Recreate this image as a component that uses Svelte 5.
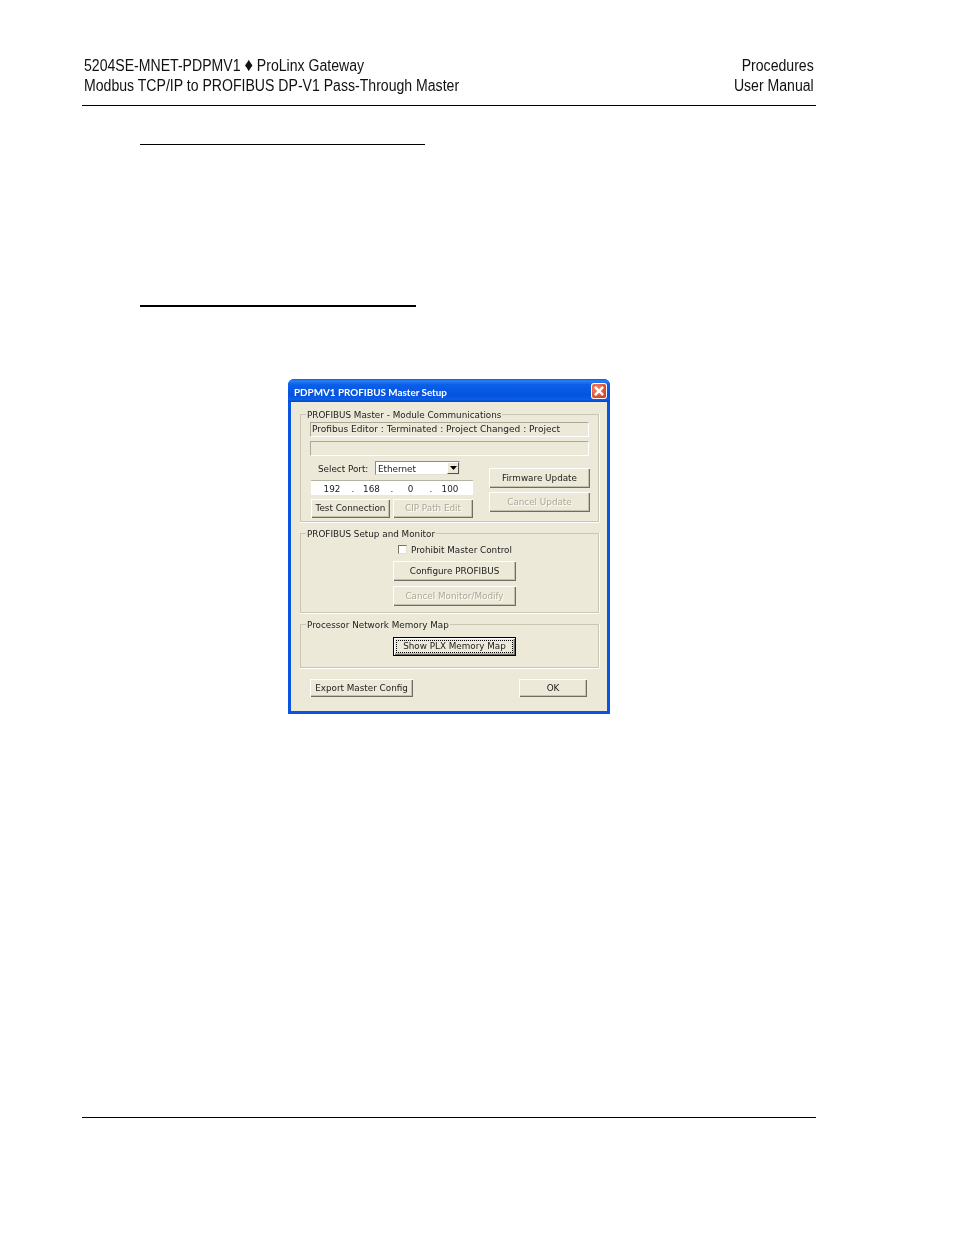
<script>
  const ip = ['192', '168', '0', '100'];
</script>

<div class="page">
  <header class="head">
    <div class="lines">
      <div>5204SE-MNET-PDPMV1 <span class="gem">♦</span> ProLinx Gateway</div>
      <div>Modbus TCP/IP to PROFIBUS DP-V1 Pass-Through Master</div>
    </div>
    <div class="lines right">
      <div>Procedures</div>
      <div>User Manual</div>
    </div>
  </header>

  <main class="main">
    <div class="rule one"></div>
    <div class="rule two"></div>

    <section class="dialog">
      <div class="title">
        <span class="ttext">PDPMV1 PROFIBUS Master Setup</span>
        <div class="close">
          <svg viewBox="0 0 16 16" width="16" height="16">
            <path d="M4.8 4.8l6.4 6.4M11.2 4.8l-6.4 6.4" stroke="#fff" stroke-width="2.4" stroke-linecap="square" fill="none" />
          </svg>
        </div>
      </div>
      <div class="client">
        <fieldset class="g1">
          <legend>PROFIBUS Master - Module Communications</legend>
          <div class="status">Profibus Editor : Terminated : Project Changed : Project</div>
          <div class="status s2"></div>
          <div class="cols">
            <div class="left">
              <div class="port">
                <span class="plabel">Select Port:</span>
                <div class="select">
                  <span>Ethernet</span>
                  <div class="arrow"><svg viewBox="0 0 7 4" width="7" height="4"><path d="M0 0h7L3.5 4z" fill="#000" /></svg></div>
                </div>
              </div>
              <div class="ip">
                {#each ip as part, i}
                  <span class="oct">{part}</span>{#if i < 3}<span class="dot">.</span>{/if}
                {/each}
              </div>
              <div class="pair">
                <button class="test">Test Connection</button>
                <button class="cip" disabled>CIP Path Edit</button>
              </div>
            </div>
            <div class="rightcol">
              <button class="wide">Firmware Update</button>
              <button class="wide" disabled>Cancel Update</button>
            </div>
          </div>
        </fieldset>

        <fieldset class="g2">
          <legend>PROFIBUS Setup and Monitor</legend>
          <div class="center">
            <label class="check"><span class="box"></span><span>Prohibit Master Control</span></label>
            <button class="mid">Configure PROFIBUS</button>
            <button class="mid" disabled>Cancel Monitor/Modify</button>
          </div>
        </fieldset>

        <fieldset class="g3">
          <legend>Processor Network Memory Map</legend>
          <div class="center">
            <button class="mid def"><span>Show PLX Memory Map</span></button>
          </div>
        </fieldset>

        <div class="actions">
          <button class="export">Export Master Config</button>
          <button class="ok">OK</button>
        </div>
      </div>
    </section>
  </main>

  <div class="foot"></div>
</div>

<style>
  :global(body) {
    margin: 0;
    background: #fff;
  }
  .page {
    width: 954px;
    height: 1235px;
    box-sizing: border-box;
    padding: 55px 138px 0 82px;
    font-family: "Liberation Sans", Arial, sans-serif;
    color: #111;
    overflow: hidden;
  }
  .head {
    display: flex;
    justify-content: space-between;
    padding: 1px 2px 9px;
    border-bottom: 1px solid #000;
    font-size: 16px;
    line-height: 20px;
    height: 40px;
    white-space: nowrap;
  }
  .lines {
    transform: scaleX(0.88);
    transform-origin: left center;
  }
  .right {
    text-align: right;
    transform-origin: right center;
  }
  .gem {
    font-size: 19px;
    line-height: 0;
  }
  .main {
    height: 973px;
    padding-left: 58px;
    box-sizing: border-box;
  }
  .rule { background: #000; }
  .one { width: 285px; height: 1px; margin-top: 38px; }
  .two { width: 276px; height: 2px; margin-top: 160px; }
  .dialog {
    width: 322px;
    height: 335px;
    margin: 72px 0 0 148px;
    box-sizing: border-box;
    background: #0a54e2;
    border-radius: 6px 6px 0 0;
    padding: 0 3px 3px;
    display: flex;
    flex-direction: column;
    font-family: "DejaVu Sans", Tahoma, sans-serif;
    font-size: 8.8px;
    color: #222;
    filter: blur(0.3px);
  }
  .title {
    height: 23px;
    flex: none;
    margin: 0 -3px;
    padding: 0 3px 0 6px;
    border-radius: 6px 6px 0 0;
    background: linear-gradient(#0a5ae6 0, #2a80f4 8%, #0a5fe8 25%, #0553e0 70%, #0a5ee8 90%, #0343c4 100%);
    display: flex;
    align-items: center;
    justify-content: space-between;
    color: #fff;
    font-family: Lato, "Liberation Sans", sans-serif;
    font-weight: bold;
    font-size: 9.85px;
  }
  .ttext { padding-top: 2px; }
  .close {
    width: 16px;
    height: 16px;
    border-radius: 3px;
    background: radial-gradient(circle at 35% 35%, #ee8d6e, #d9432a 70%, #c23418);
    box-shadow: 0 0 0 1px #fff inset;
    display: flex;
  }
  .client {
    flex: 1;
    background: #ece9d8;
    padding: 6px 8px 0 9px;
    min-height: 0;
    display: flex;
    flex-direction: column;
  }
  fieldset {
    margin: 0 0 5px;
    border: 1px solid #c9c6b4;
    box-shadow: 0 1px 0 #fff, 1px 0 0 #fff;
    padding: 1px 9px 3px 9px;
    min-width: 0;
  }
  legend {
    padding: 0 1px;
    margin-left: -4px;
    height: 13px;
    line-height: 15px;
    box-sizing: border-box;
    white-space: nowrap;
  }
  .status {
    height: 15px;
    box-sizing: border-box;
    border: 1px solid;
    border-color: #aaa899 #fff #fff #aaa899;
    padding-left: 1px;
    font-size: 9.05px;
    line-height: 12px;
    white-space: nowrap;
    overflow: hidden;
  }
  .s2 { margin-top: 4px; }
  .cols {
    display: flex;
    align-items: flex-start;
    margin-left: 1px;
    margin-right: -2px;
    gap: 16px;
  }
  .left { width: 162px; flex: none; }
  .port {
    display: flex;
    align-items: center;
    margin-top: 5px;
    height: 14px;
  }
  .plabel { width: 64px; padding: 2px 0 0 7px; box-sizing: border-box; white-space: nowrap; }
  .select {
    width: 85px;
    height: 14px;
    box-sizing: border-box;
    background: #fff;
    border: 1px solid;
    border-color: #8d8b7f #e4e1d2 #e4e1d2 #8d8b7f;
    padding-left: 2px;
    line-height: 14px;
    display: flex;
    justify-content: space-between;
  }
  .arrow {
    width: 12px;
    height: 12px;
    box-sizing: border-box;
    background: #ece9d8;
    border: 1px solid;
    border-color: #fff #55544c #55544c #fff;
    display: flex;
    align-items: center;
    justify-content: center;
  }
  .ip {
    margin-top: 5px;
    height: 15px;
    background: #fff;
    border-top: 1px solid #b5b3a4;
    box-sizing: border-box;
    display: grid;
    grid-template-columns: 32px 8px 31px 8px 31px 8px 32px;
    padding-left: 5px;
    line-height: 16px;
    text-align: center;
  }
  .dot { padding-left: 2px; }
  .pair {
    display: flex;
    justify-content: space-between;
    margin-top: 4px;
  }
  button {
    font: inherit;
    color: #222;
    background: #ece9d8;
    border: 0;
    padding: 0;
    box-sizing: border-box;
    box-shadow: inset 1px 1px 0 #fff, inset -1px -1px 0 #6f6d62, inset -2px -2px 0 #c4c1b0;
    white-space: nowrap;
  }
  button:disabled {
    color: #aca899;
    text-shadow: 1px 1px 0 #fff;
  }
  .test { width: 79px; height: 19px; padding-bottom: 2px; }
  .cip { width: 80px; height: 19px; padding-bottom: 2px; }
  .rightcol {
    display: flex;
    flex-direction: column;
    gap: 4px;
    margin-top: 12px;
  }
  .wide { width: 101px; height: 20px; }
  .center {
    display: flex;
    flex-direction: column;
    align-items: flex-start;
    padding-left: 83px;
  }
  .g2 { padding-top: 5px; padding-bottom: 6px; }
  .g2 .center { gap: 5px; }
  .g3 { padding-top: 6px; padding-bottom: 11px; margin-bottom: 0; }
  .check {
    width: 123px;
    height: 9px;
    margin-bottom: 2px;
    display: flex;
    align-items: center;
    gap: 4px;
    padding-left: 5px;
    box-sizing: border-box;
    white-space: nowrap;
  }
  .box {
    width: 9px;
    height: 9px;
    flex: none;
    box-sizing: border-box;
    background: #fff;
    border: 1px solid;
    border-color: #77756a #e4e1d2 #e4e1d2 #77756a;
  }
  .mid { width: 123px; height: 20px; }
  .def {
    border: 1px solid #000;
    padding: 2px;
    height: 19px;
  }
  .def span {
    display: block;
    height: 100%;
    line-height: 11px;
    border: 1px dotted #000;
    box-sizing: border-box;
  }
  .actions {
    display: flex;
    justify-content: space-between;
    padding: 11px 12px 0 10px;
  }
  .export { width: 103px; height: 18px; }
  .ok { width: 68px; height: 18px; }
  .foot { height: 1px; background: #000; }
</style>
